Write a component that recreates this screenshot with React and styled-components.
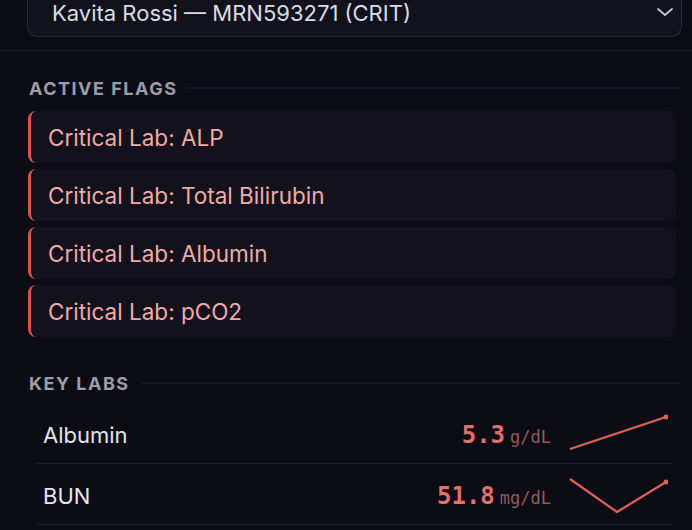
import React from 'react';
import styled, { createGlobalStyle } from 'styled-components';

const GlobalStyle = createGlobalStyle`
  html, body {
    margin: 0;
    padding: 0;
    background: #0c0c15;
    font-family: Inter, "Noto Sans", sans-serif;
    overflow: hidden;
  }
`;

const Page = styled.div`
  width: 692px;
  height: 530px;
  background: #0c0c15;
  overflow: hidden;
`;

const Header = styled.div`
  padding: 0 10px 13px 27px;
  border-bottom: 1px solid #1d1d29;
`;

const Select = styled.div`
  margin-top: -10px;
  height: 47px;
  box-sizing: border-box;
  border: 1px solid #2a2a38;
  border-radius: 0 0 10px 10px;
  border-top: none;
  background: #12121c;
  display: flex;
  align-items: center;
  justify-content: space-between;
  padding: 0 6px 0 24px;
  color: #dcdce6;
  font-size: 22px;
`;

const Section = styled.section`
  padding: ${p => p.top}px 12px 0 29px;
`;

const SectionTitle = styled.div`
  display: flex;
  align-items: center;
  gap: 12px;
  height: 18px;
  margin-bottom: ${p => p.gap}px;
  color: #9c9caa;
  font-size: 18px;
  font-weight: 700;
  letter-spacing: 1.5px;
  text-transform: uppercase;

  &::after {
    content: '';
    flex: 1;
    height: 2px;
    background: #171722;
  }
`;

const FlagList = styled.div`
  display: flex;
  flex-direction: column;
  gap: 6px;
  margin-left: -1px;
  padding-right: 4px;
`;

const Flag = styled.div`
  height: 52px;
  box-sizing: border-box;
  display: flex;
  align-items: center;
  padding-left: 17px;
  border-left: 3px solid #d5564f;
  border-radius: 8px;
  background: #13121c;
  color: #f0aaa8;
  font-size: 22.5px;
`;

const LabList = styled.div`
  margin: 0 8px 0 7px;
`;

const LabRow = styled.div`
  height: 61px;
  box-sizing: border-box;
  display: flex;
  align-items: center;
  padding: 4px 4px 0 7px;
  border-bottom: 1px solid #1b1b27;
`;

const LabName = styled.div`
  flex: 1;
  color: #e4e4ee;
  font-size: 22px;
`;

const LabValue = styled.div`
  display: flex;
  align-items: baseline;
  gap: 5px;
  margin-right: 17px;
  font-family: "DejaVu Sans Mono", "Liberation Mono", monospace;
`;

const Number = styled.span`
  color: #e0706a;
  font-size: 24px;
  font-weight: 700;
`;

const Unit = styled.span`
  color: #94585e;
  font-size: 17px;
`;

const flags = ['ALP', 'Total Bilirubin', 'Albumin', 'pCO2'];

const labs = [
  { name: 'Albumin', value: '5.3', unit: 'g/dL', points: [[2, 35], [98, 3]] },
  { name: 'BUN', value: '51.8', unit: 'mg/dL', points: [[2, 4], [49, 37], [98, 7]] },
];

function Chevron() {
  return (
    <svg width="20" height="20" viewBox="0 0 20 20" fill="none">
      <path d="M3 6l7 6 7-6" stroke="#c9c9d4" strokeWidth="1.8" strokeLinecap="round" strokeLinejoin="round" />
    </svg>
  );
}

function Sparkline({ points }) {
  const last = points[points.length - 1];
  return (
    <svg width="100" height="42" viewBox="0 0 100 42" fill="none">
      <polyline
        points={points.map(p => p.join(',')).join(' ')}
        stroke="#e0605a"
        strokeWidth="2.2"
        strokeLinejoin="round"
      />
      <circle cx={last[0]} cy={last[1]} r="2.4" fill="#e0605a" />
    </svg>
  );
}

export default function App() {
  return (
    <Page>
      <GlobalStyle />
      <Header>
        <Select>
          <span>Kavita Rossi — MRN593271 (CRIT)</span>
          <Chevron />
        </Select>
      </Header>

      <Section top={28}>
        <SectionTitle gap={14}>Active Flags</SectionTitle>
        <FlagList>
          {flags.map(f => (
            <Flag key={f}>Critical Lab: {f}</Flag>
          ))}
        </FlagList>
      </Section>

      <Section top={37}>
        <SectionTitle gap={11}>Key Labs</SectionTitle>
        <LabList>
          {labs.map(l => (
            <LabRow key={l.name}>
              <LabName>{l.name}</LabName>
              <LabValue>
                <Number>{l.value}</Number>
                <Unit>{l.unit}</Unit>
              </LabValue>
              <Sparkline points={l.points} />
            </LabRow>
          ))}
        </LabList>
      </Section>
    </Page>
  );
}
